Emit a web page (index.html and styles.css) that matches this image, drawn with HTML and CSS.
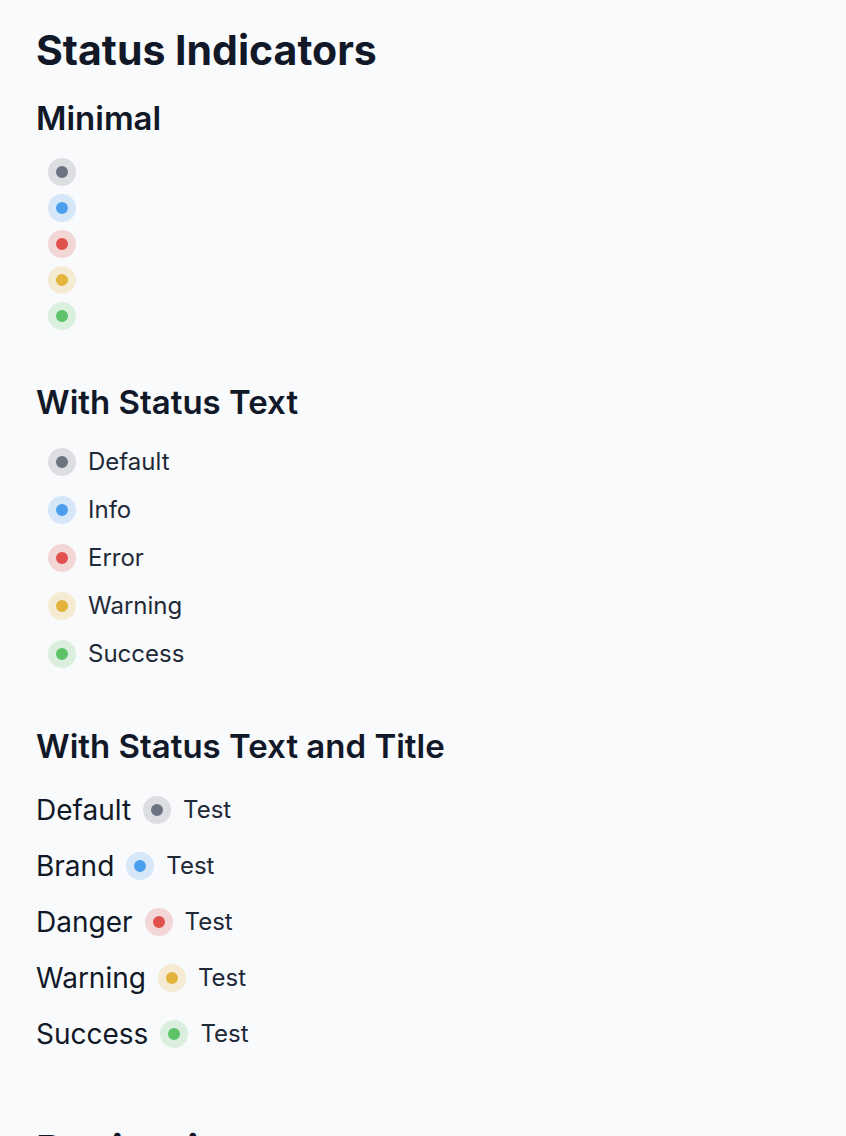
FILE: index.html
```
<!DOCTYPE html>
<html lang="en">
<head>
<meta charset="utf-8">
<title>Status Indicators</title>
<link rel="stylesheet" href="styles.css">
</head>
<body>
<main class="page">
  <h1 class="title">Status Indicators</h1>
  <section class="section">
    <h2 class="heading">Minimal</h2>
    <ul class="list list-minimal">
      <li class="status"><span class="dot"></span></li>
      <li class="status"><span class="dot dot-info"></span></li>
      <li class="status"><span class="dot dot-error"></span></li>
      <li class="status"><span class="dot dot-warning"></span></li>
      <li class="status"><span class="dot dot-success"></span></li>
    </ul>
  </section>
  <section class="section">
    <h2 class="heading">With Status Text</h2>
    <ul class="list list-text">
      <li class="status"><span class="dot"></span><span class="text">Default</span></li>
      <li class="status"><span class="dot dot-info"></span><span class="text">Info</span></li>
      <li class="status"><span class="dot dot-error"></span><span class="text">Error</span></li>
      <li class="status"><span class="dot dot-warning"></span><span class="text">Warning</span></li>
      <li class="status"><span class="dot dot-success"></span><span class="text">Success</span></li>
    </ul>
  </section>
  <section class="section">
    <h2 class="heading">With Status Text and Title</h2>
    <ul class="list list-titled">
      <li class="status"><span class="label">Default</span><span class="dot"></span><span class="text">Test</span></li>
      <li class="status"><span class="label">Brand</span><span class="dot dot-info"></span><span class="text">Test</span></li>
      <li class="status"><span class="label">Danger</span><span class="dot dot-error"></span><span class="text">Test</span></li>
      <li class="status"><span class="label">Warning</span><span class="dot dot-warning"></span><span class="text">Test</span></li>
      <li class="status"><span class="label">Success</span><span class="dot dot-success"></span><span class="text">Test</span></li>
    </ul>
  </section>
  <h1 class="title title-next">Pagination</h1>
</main>
</body>
</html>
```
FILE: styles.css
```
html {
  scrollbar-width: none;
}
body {
  margin: 0;
  background: #f9fafc;
  color: #111827;
  font-family: Inter, "Liberation Sans", sans-serif;
}
.page {
  padding: 26px 36px;
}
.title {
  margin: 0;
  font-size: 41px;
  line-height: 48px;
  font-weight: 700;
}
.heading {
  margin: 0;
  font-size: 33px;
  line-height: 40px;
  font-weight: 600;
}
.section {
  padding: 24px 0;
}
.list {
  display: flex;
  flex-direction: column;
  margin: 0;
  padding: 0;
  list-style: none;
}
.list-minimal {
  gap: 8px;
  padding: 20px 12px 4px;
}
.list-text {
  padding: 16px 12px 0;
}
.list-text .status {
  height: 48px;
}
.list-titled {
  padding-top: 16px;
}
.list-titled .status {
  height: 56px;
}
.status {
  display: flex;
  align-items: center;
  gap: 12px;
}
.dot {
  box-sizing: border-box;
  width: 28px;
  height: 28px;
  border: 8px solid #dddee2;
  border-radius: 50%;
  background: #6b7280;
}
.dot-info { background: #4a9fec; border-color: #d5e7f8; }
.dot-error { background: #e0504c; border-color: #f3d7d7; }
.dot-warning { background: #e3b43c; border-color: #f5ebd3; }
.dot-success { background: #5dc268; border-color: #daefde; }
.text {
  font-size: 24px;
  line-height: 32px;
  color: #1f2937;
}
.label {
  font-size: 28px;
  line-height: 40px;
}
.title-next {
  padding-top: 40px;
}
```
